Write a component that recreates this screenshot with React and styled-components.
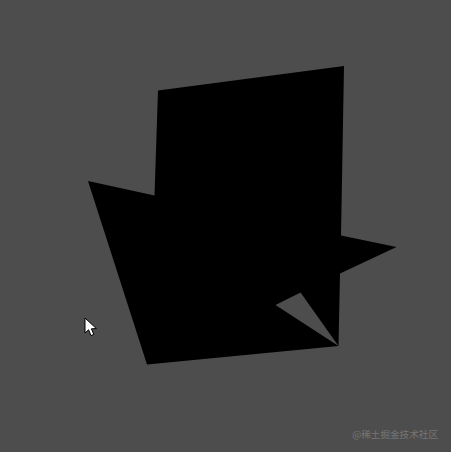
import React from "react";
import styled, { createGlobalStyle } from "styled-components";

const GlobalStyle = createGlobalStyle`
  html, body {
    margin: 0;
    padding: 0;
    background: #4d4d4d;
  }
`;

const App = () => {
  return (
    <Stage>
      <GlobalStyle />
      <Shape viewBox="0 0 451 452">
        <polygon points="158,90.5 344,66 341,235.5 396.5,247 340,273.5 338.5,346 300.5,292.5 275.5,305 338.5,346 147,364.5 88,181 154.5,195.5" />
      </Shape>
      <Cursor viewBox="0 0 14 20">
        <path
          d="M1 1 L1 16 L4.6 12.8 L7 18.6 L9.8 17.4 L7.4 11.8 L12.4 11.6 Z"
          fill="#fff"
          stroke="#000"
          strokeWidth="1"
          strokeLinejoin="miter"
        />
      </Cursor>
      <Watermark>@稀土掘金技术社区</Watermark>
    </Stage>
  );
};

export default App;

const Stage = styled.div`
  position: relative;
  width: 451px;
  height: 452px;
  overflow: hidden;
  background: #4d4d4d;
`;

const Shape = styled.svg`
  display: block;
  width: 451px;
  height: 452px;
  fill: #000;
`;

const Cursor = styled.svg`
  position: absolute;
  left: 84px;
  top: 317px;
  width: 14px;
  height: 20px;
`;

const Watermark = styled.span`
  position: absolute;
  right: 13px;
  top: 427px;
  font-family: "Noto Sans CJK SC", "Liberation Sans", sans-serif;
  font-size: 9.6px;
  line-height: 14px;
  white-space: nowrap;
  color: #767676;
`;
